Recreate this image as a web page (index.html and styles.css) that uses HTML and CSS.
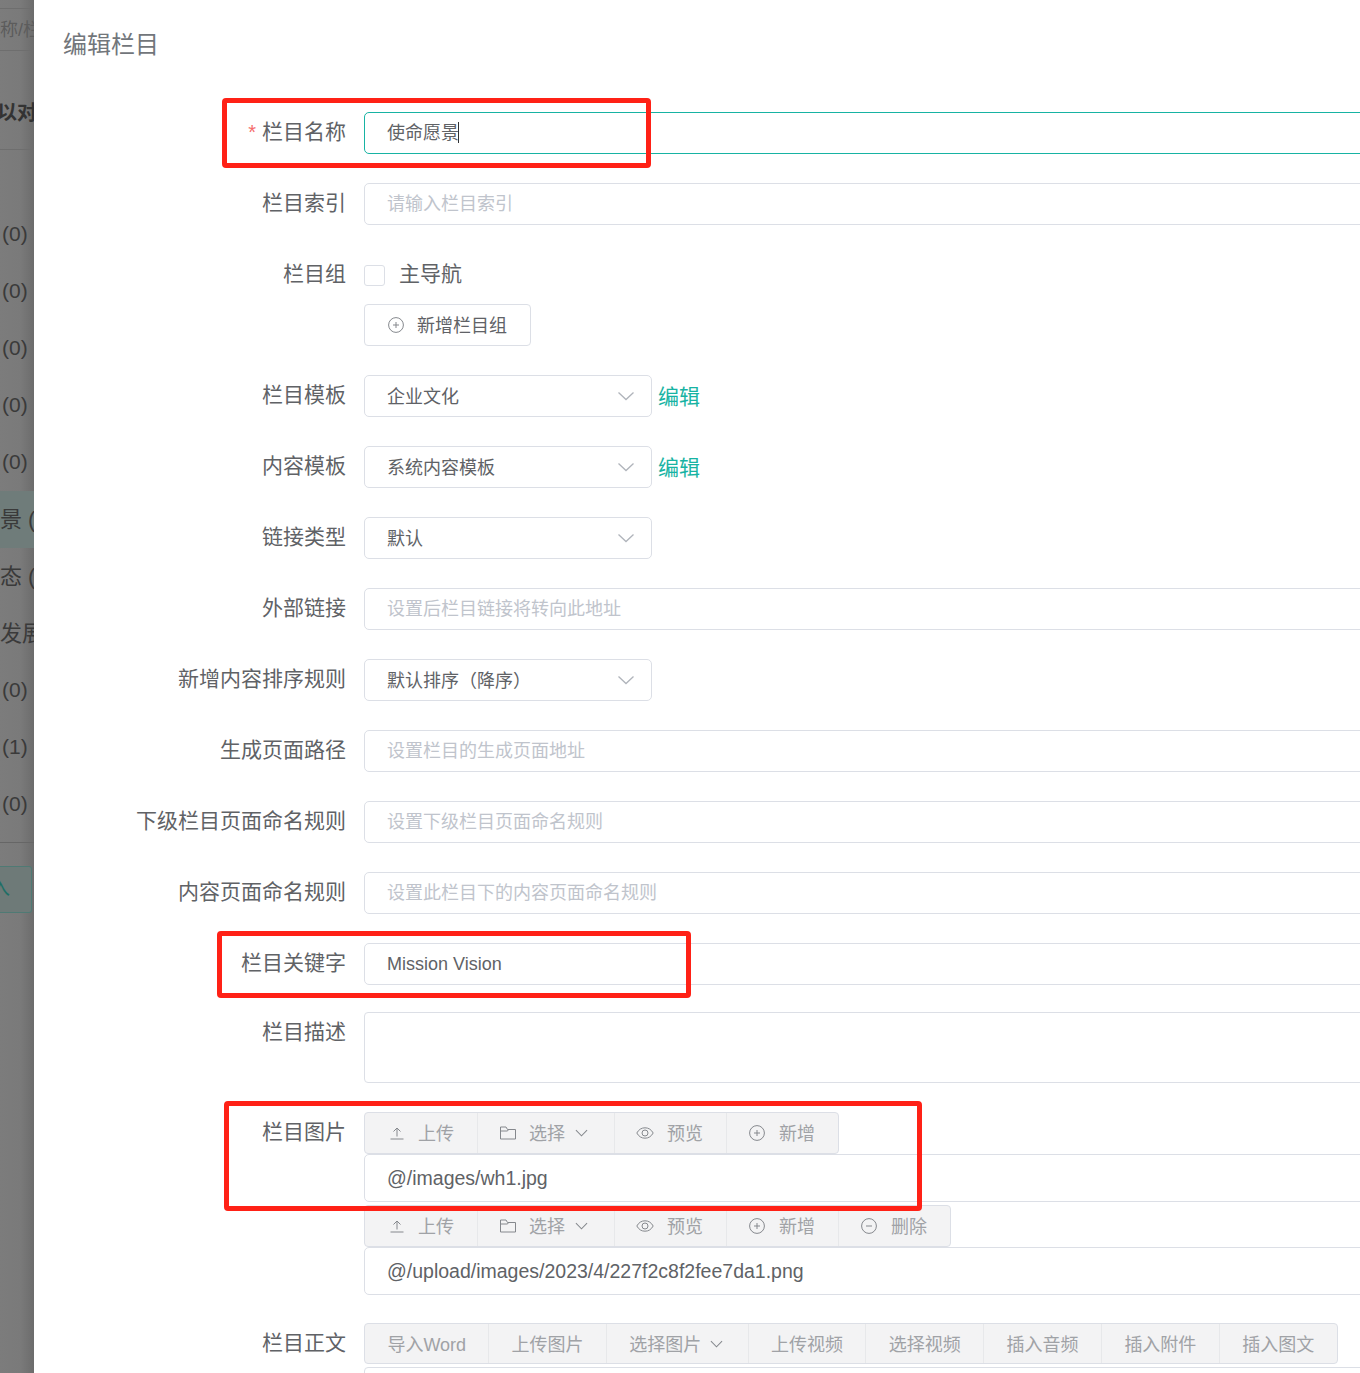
FILE: index.html
```html
<!DOCTYPE html>
<html lang="zh-CN">
<head>
<meta charset="utf-8">
<title>编辑栏目</title>
<link rel="stylesheet" href="styles.css">
</head>
<body>
<div class="page">
  <aside class="backdrop">
    <div class="bd-search">称/栏目</div>
    <div class="bd-title">以对</div>
    <ul class="bd-list">
      <li>(0)</li><li>(0)</li><li>(0)</li><li>(0)</li><li>(0)</li>
      <li class="bd-active">景 (</li><li class="bd-cut">态 (</li><li class="bd-cut">发展</li>
      <li>(0)</li><li>(1)</li><li>(0)</li>
    </ul>
    <div class="bd-btn-wrap"><span class="bd-btn">入</span></div>
  </aside>
  <main class="drawer">
    <h1 class="drawer-title">编辑栏目</h1>
    <form class="form">
      <div class="row"><label class="label"><i class="req">*</i>栏目名称</label><div class="field"><div class="input focus">使命愿景<span class="caret"></span></div></div></div>
      <div class="row"><label class="label">栏目索引</label><div class="field"><div class="input ph">请输入栏目索引</div></div></div>
      <div class="row"><label class="label">栏目组</label><div class="field">
        <div class="check-line"><span class="checkbox"></span><span class="check-text">主导航</span></div>
        <button type="button" class="add-btn"><svg class="ico" viewBox="0 0 16 16"><circle cx="8" cy="8" r="7.4"/><path d="M8 5v6M5 8h6"/></svg>新增栏目组</button>
      </div></div>
      <div class="row"><label class="label">栏目模板</label><div class="field inline"><div class="select">企业文化<svg class="chev" viewBox="0 0 18 10"><path d="M1.500 1.500 9 8.500l7.500-7"/></svg></div><a class="edit">编辑</a></div></div>
      <div class="row"><label class="label">内容模板</label><div class="field inline"><div class="select">系统内容模板<svg class="chev" viewBox="0 0 18 10"><path d="M1.500 1.500 9 8.500l7.500-7"/></svg></div><a class="edit">编辑</a></div></div>
      <div class="row"><label class="label">链接类型</label><div class="field inline"><div class="select">默认<svg class="chev" viewBox="0 0 18 10"><path d="M1.500 1.500 9 8.500l7.500-7"/></svg></div></div></div>
      <div class="row"><label class="label">外部链接</label><div class="field"><div class="input ph">设置后栏目链接将转向此地址</div></div></div>
      <div class="row"><label class="label">新增内容排序规则</label><div class="field inline"><div class="select">默认排序（降序）<svg class="chev" viewBox="0 0 18 10"><path d="M1.500 1.500 9 8.500l7.500-7"/></svg></div></div></div>
      <div class="row"><label class="label">生成页面路径</label><div class="field"><div class="input ph">设置栏目的生成页面地址</div></div></div>
      <div class="row"><label class="label">下级栏目页面命名规则</label><div class="field"><div class="input ph">设置下级栏目页面命名规则</div></div></div>
      <div class="row"><label class="label">内容页面命名规则</label><div class="field"><div class="input ph">设置此栏目下的内容页面命名规则</div></div></div>
      <div class="row row-keyword"><label class="label">栏目关键字</label><div class="field"><div class="input">Mission Vision</div></div></div>
      <div class="row"><label class="label">栏目描述</label><div class="field"><div class="textarea"></div></div></div>
      <div class="row row-image"><label class="label">栏目图片</label><div class="field">
        <div class="toolbar">
          <span class="tb tb-upload"><svg class="ico" viewBox="0 0 18 16"><path d="M9 11.500V3M5.500 6.500 9 3l3.500 3.500M2.500 14h13"/></svg>上传</span>
          <span class="tb tb-select"><svg class="ico" viewBox="0 0 18 16"><path d="M1.500 14V2h5.500l1.500 2.500h8V14z"/><path d="M1.500 6h7l1-1.500"/></svg>选择<svg class="chev-sm" viewBox="0 0 14 8"><path d="M1 1l6 6 6-6"/></svg></span>
          <span class="tb tb-view"><svg class="ico" viewBox="0 0 18 16"><path d="M.8 8c2-3.500 4.700-5.200 8.200-5.200s6.200 1.700 8.200 5.200c-2 3.500-4.700 5.200-8.200 5.200S2.800 11.500.8 8z"/><circle cx="9" cy="8" r="3"/></svg>预览</span>
          <span class="tb tb-view"><svg class="ico" viewBox="0 0 16 16"><circle cx="8" cy="8" r="7.400"/><path d="M8 5v6M5 8h6"/></svg>新增</span>
        </div>
        <div class="path-input">@/images/wh1.jpg</div>
        <div class="toolbar">
          <span class="tb tb-upload"><svg class="ico" viewBox="0 0 18 16"><path d="M9 11.500V3M5.500 6.500 9 3l3.500 3.500M2.500 14h13"/></svg>上传</span>
          <span class="tb tb-select"><svg class="ico" viewBox="0 0 18 16"><path d="M1.500 14V2h5.500l1.500 2.500h8V14z"/><path d="M1.500 6h7l1-1.500"/></svg>选择<svg class="chev-sm" viewBox="0 0 14 8"><path d="M1 1l6 6 6-6"/></svg></span>
          <span class="tb tb-view"><svg class="ico" viewBox="0 0 18 16"><path d="M.8 8c2-3.500 4.700-5.200 8.200-5.200s6.200 1.700 8.200 5.200c-2 3.500-4.700 5.200-8.200 5.200S2.800 11.500.8 8z"/><circle cx="9" cy="8" r="3"/></svg>预览</span>
          <span class="tb tb-view"><svg class="ico" viewBox="0 0 16 16"><circle cx="8" cy="8" r="7.400"/><path d="M8 5v6M5 8h6"/></svg>新增</span>
          <span class="tb tb-view"><svg class="ico" viewBox="0 0 16 16"><circle cx="8" cy="8" r="7.400"/><path d="M5 8h6"/></svg>删除</span>
        </div>
        <div class="path-input">@/upload/images/2023/4/227f2c8f2fee7da1.png</div>
      </div></div>
      <div class="row"><label class="label">栏目正文</label><div class="field">
        <div class="toolbar tb-editor">
          <span class="tb tb-word">导入Word</span><span class="tb">上传图片</span>
          <span class="tb">选择图片<svg class="chev-sm" viewBox="0 0 14 8"><path d="M1 1l6 6 6-6"/></svg></span>
          <span class="tb">上传视频</span><span class="tb">选择视频</span><span class="tb">插入音频</span><span class="tb">插入附件</span><span class="tb">插入图文</span>
        </div>
        <div class="editor"></div>
      </div></div>
    </form>
  </main>
</div>
<div class="mark mark-1"></div>
<div class="mark mark-2"></div>
<div class="mark mark-3"></div>
</body>
</html>
```
FILE: styles.css
```css
* { box-sizing: border-box; }
html, body { margin: 0; height: 1373px; overflow: hidden; background: #fff; }
body { position: relative; width: 1360px; font-family: "Liberation Sans", "Noto Sans CJK SC", sans-serif; color: #606266; }
.page { display: flex; width: 1600px; height: 1373px; }

.backdrop { width: 34px; flex: none; overflow: hidden; background: linear-gradient(90deg, #7c7c7c 0, #7a7a7a 60%, #6c6c6c 100%); color: #333; font-size: 20px; white-space: nowrap; }
.bd-search { height: 43px; margin-top: 8px; border-top: 1px solid #6e6e6e; border-bottom: 1px solid #6e6e6e; line-height: 42px; color: #5c5c5c; font-size: 18px; }
.bd-title { height: 99px; border-bottom: 1px solid #6e6e6e; line-height: 125px; font-weight: 700; font-size: 20px; margin-left: -3px; }
.bd-list { list-style: none; margin: 56px 0 0; padding: 0 0 9px; border-bottom: 1px solid #666; }
.bd-list li { height: 57px; line-height: 55px; padding-left: 2px; color: #3a3a3a; font-size: 21px; }
.bd-list .bd-active { background: #6f7c7a; padding-left: 0; font-size: 22px; line-height: 57px; }
.bd-list .bd-cut { padding-left: 0; font-size: 22px; line-height: 57px; }
.bd-btn-wrap { margin-top: 23px; }
.bd-btn { display: block; width: 32px; height: 47px; border: 1px solid #4f7a74; border-left: 0; border-radius: 0 3px 3px 0; background: #6e7a78; color: #1f6f66; line-height: 42px; font-size: 20px; text-indent: -10px; overflow: hidden; }

.drawer { flex: 1; background: #fff; min-width: 0; }
.drawer-title { margin: 0; padding: 27px 0 0 29px; height: 78px; font-size: 24px; line-height: 36px; font-weight: 400; color: #72767b; }

.form { display: flex; flex-direction: column; padding-top: 34px; }
.row { display: flex; align-items: flex-start; margin-bottom: 29px; }
.row-keyword { margin-bottom: 27px; }
.row-image { margin-bottom: 25px; }
.label { width: 330px; flex: none; padding-right: 18px; height: 42px; line-height: 39px; text-align: right; font-size: 21px; color: #606266; white-space: nowrap; }
.req { font-style: normal; color: #f56c6c; font-size: 20px; margin-right: 6px; }
.field { flex: 1; min-width: 0; }
.inline { display: flex; align-items: center; }

.input { height: 42px; line-height: 40px; padding: 0 22px; border: 1px solid #dcdfe6; border-radius: 5px; font-size: 18px; color: #606266; background: #fff; }
.input.focus { border-color: #17b3a3; }
.input.ph { color: #c0c4cc; }
.caret { display: inline-block; width: 1px; height: 21px; background: #303133; vertical-align: -4px; margin-left: -1px; }

.select { width: 288px; height: 42px; padding: 0 22px 2px; border: 1px solid #dcdfe6; border-radius: 5px; font-size: 18px; display: flex; justify-content: space-between; align-items: center; }
.chev { width: 18px; height: 10px; margin: 2px -6px 0 0; fill: none; stroke: #b0b4bb; stroke-width: 1.300; }
.edit { margin: -2px 0 0 6px; font-size: 21px; color: #17b3a3; }

.check-line { height: 42px; display: flex; align-items: center; margin-bottom: 8px; }
.checkbox { width: 21px; height: 21px; border: 1px solid #dcdfe6; border-radius: 3px; }
.check-text { margin: -6px 0 0 14px; font-size: 21px; }
.add-btn { display: flex; align-items: center; width: 167px; height: 42px; padding: 0 0 2px 22px; background: #fff; border: 1px solid #dcdfe6; border-radius: 4px; font: inherit; font-size: 18px; color: #606266; }
.add-btn .ico { margin: 2px 12px 0 0; }

.ico { width: 18px; height: 16px; flex: none; fill: none; stroke: #85888d; stroke-width: 1; }
.chev-sm { width: 13px; height: 8px; margin: 2px 0 0 10px; fill: none; stroke: #85888d; stroke-width: 1.100; }

.textarea { height: 71px; border: 1px solid #dcdfe6; border-radius: 4px; }

.toolbar { display: inline-flex; height: 42px; vertical-align: top; background: #f3f3f4; border: 1px solid #dcdfe6; border-radius: 4px; font-size: 18px; color: #a0a2a6; }
.tb { display: flex; align-items: center; height: 100%; padding-bottom: 2px; border-left: 1px solid #e7e8ea; white-space: nowrap; }
.tb:first-child { border-left: 0; }
.tb .ico { margin: 2px 12px 0 0; }
.tb-upload { width: 112px; padding-left: 23px; }
.tb-select { width: 137px; padding-left: 21px; }
.tb-view { width: 112px; padding-left: 21px; }
.tb-view .ico { margin-right: 13px; }
.path-input { height: 48px; margin-bottom: 3px; line-height: 46px; padding: 0 22px; border: 1px solid #dcdfe6; border-radius: 5px; font-size: 19.500px; color: #606266; }

.tb-editor { height: 41px; }
.tb-editor .tb { padding: 0 22.400px 2px; }
.tb-editor .tb-word { padding-right: 22px; }
.tb-editor .chev-sm { margin: 2px 2px 0 9px; }
.editor { height: 40px; margin-top: 3px; border: 1px solid #dcdfe6; border-radius: 4px; }

.mark { position: absolute; border: 5px solid #ff2116; border-radius: 4px; pointer-events: none; }
.mark-1 { left: 222px; top: 98px; width: 429px; height: 70px; }
.mark-2 { left: 217px; top: 931px; width: 474px; height: 67px; }
.mark-3 { left: 224px; top: 1101px; width: 698px; height: 110px; }
```
